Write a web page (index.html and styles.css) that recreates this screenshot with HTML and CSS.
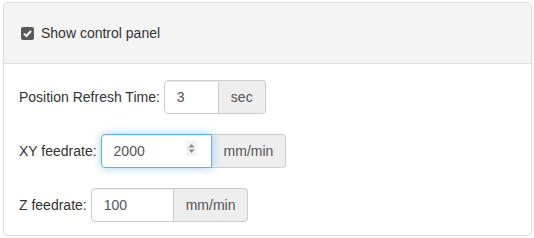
FILE: index.html
```html
<!DOCTYPE html>
<html>
<head>
<meta charset="utf-8">
<link rel="stylesheet" href="styles.css">
</head>
<body>
<div class="panel">
  <div class="panel-heading">
    <label class="check">
      <span class="box"><svg width="13" height="13" viewBox="0 0 13 13"><path d="M3 6.6 L5.4 9 L10 4" fill="none" stroke="#fff" stroke-width="2"/></svg></span>
      <span>Show control panel</span>
    </label>
  </div>
  <div class="panel-body">
    <div class="row">
      <span class="label">Position Refresh Time:</span>
      <div class="group">
        <div class="input w-sec">3</div>
        <div class="addon">sec</div>
      </div>
    </div>
    <div class="row">
      <span class="label">XY feedrate:</span>
      <div class="group">
        <div class="input focus w-xy">2000
          <span class="spin"><svg width="11" height="15" viewBox="0 0 11 15"><rect width="11" height="15" fill="#f2f2f2"/><path d="M2.5 6.5 L5.5 3 L8.5 6.5 Z" fill="#8a8a8a"/><path d="M2.5 8.5 L5.5 12 L8.5 8.5 Z" fill="#8a8a8a"/></svg></span>
        </div>
        <div class="addon">mm/min</div>
      </div>
    </div>
    <div class="row">
      <span class="label">Z feedrate:</span>
      <div class="group">
        <div class="input w-z">100</div>
        <div class="addon">mm/min</div>
      </div>
    </div>
  </div>
</div>
</body>
</html>
```
FILE: styles.css
```css
html, body {
  margin: 0;
  background: #fff;
}
body {
  padding: 2px 2px 0 3px;
  font-family: "Liberation Sans", Arial, sans-serif;
  font-size: 14px;
  color: #333;
}
.panel {
  width: 529px;
  box-sizing: border-box;
  border: 1px solid #ddd;
  border-radius: 4px;
  box-shadow: 0 1px 1px rgba(0,0,0,.05);
  overflow: hidden;
}
.panel-heading {
  height: 60px;
  background: #f4f4f4;
  border-bottom: 1px solid #ddd;
  display: flex;
  align-items: center;
  padding-left: 17px;
}
.check {
  display: flex;
  align-items: center;
  gap: 7px;
}
.box {
  width: 13px;
  height: 13px;
  border-radius: 2px;
  background: #595959;
  display: block;
}
.box svg { display: block; }
.panel-body {
  padding: 16px 15px 13px 15px;
  display: flex;
  flex-direction: column;
  gap: 20px;
}
.row {
  display: flex;
  align-items: center;
  gap: 4px;
}
.group {
  display: flex;
  height: 34px;
}
.input {
  position: relative;
  box-sizing: border-box;
  height: 34px;
  border: 1px solid #ccc;
  border-radius: 4px 0 0 4px;
  padding: 0 12px;
  line-height: 32px;
  color: #555;
  background: #fff;
  box-shadow: inset 0 1px 1px rgba(0,0,0,.075);
}
.w-sec { width: 55px; }
.w-xy { width: 111px; }
.w-z { width: 83px; }
.focus {
  border-color: #66afe9;
  box-shadow: inset 0 1px 1px rgba(0,0,0,.075), 0 0 8px rgba(102,175,233,.6);
  z-index: 2;
}
.spin {
  position: absolute;
  left: 84px;
  top: 6px;
  width: 11px;
  height: 15px;
}
.spin svg { display: block; }
.addon {
  box-sizing: border-box;
  height: 34px;
  padding: 0 12px;
  line-height: 32px;
  background: #eee;
  border: 1px solid #ccc;
  border-left: 0;
  border-radius: 0 4px 4px 0;
  color: #555;
}
```
